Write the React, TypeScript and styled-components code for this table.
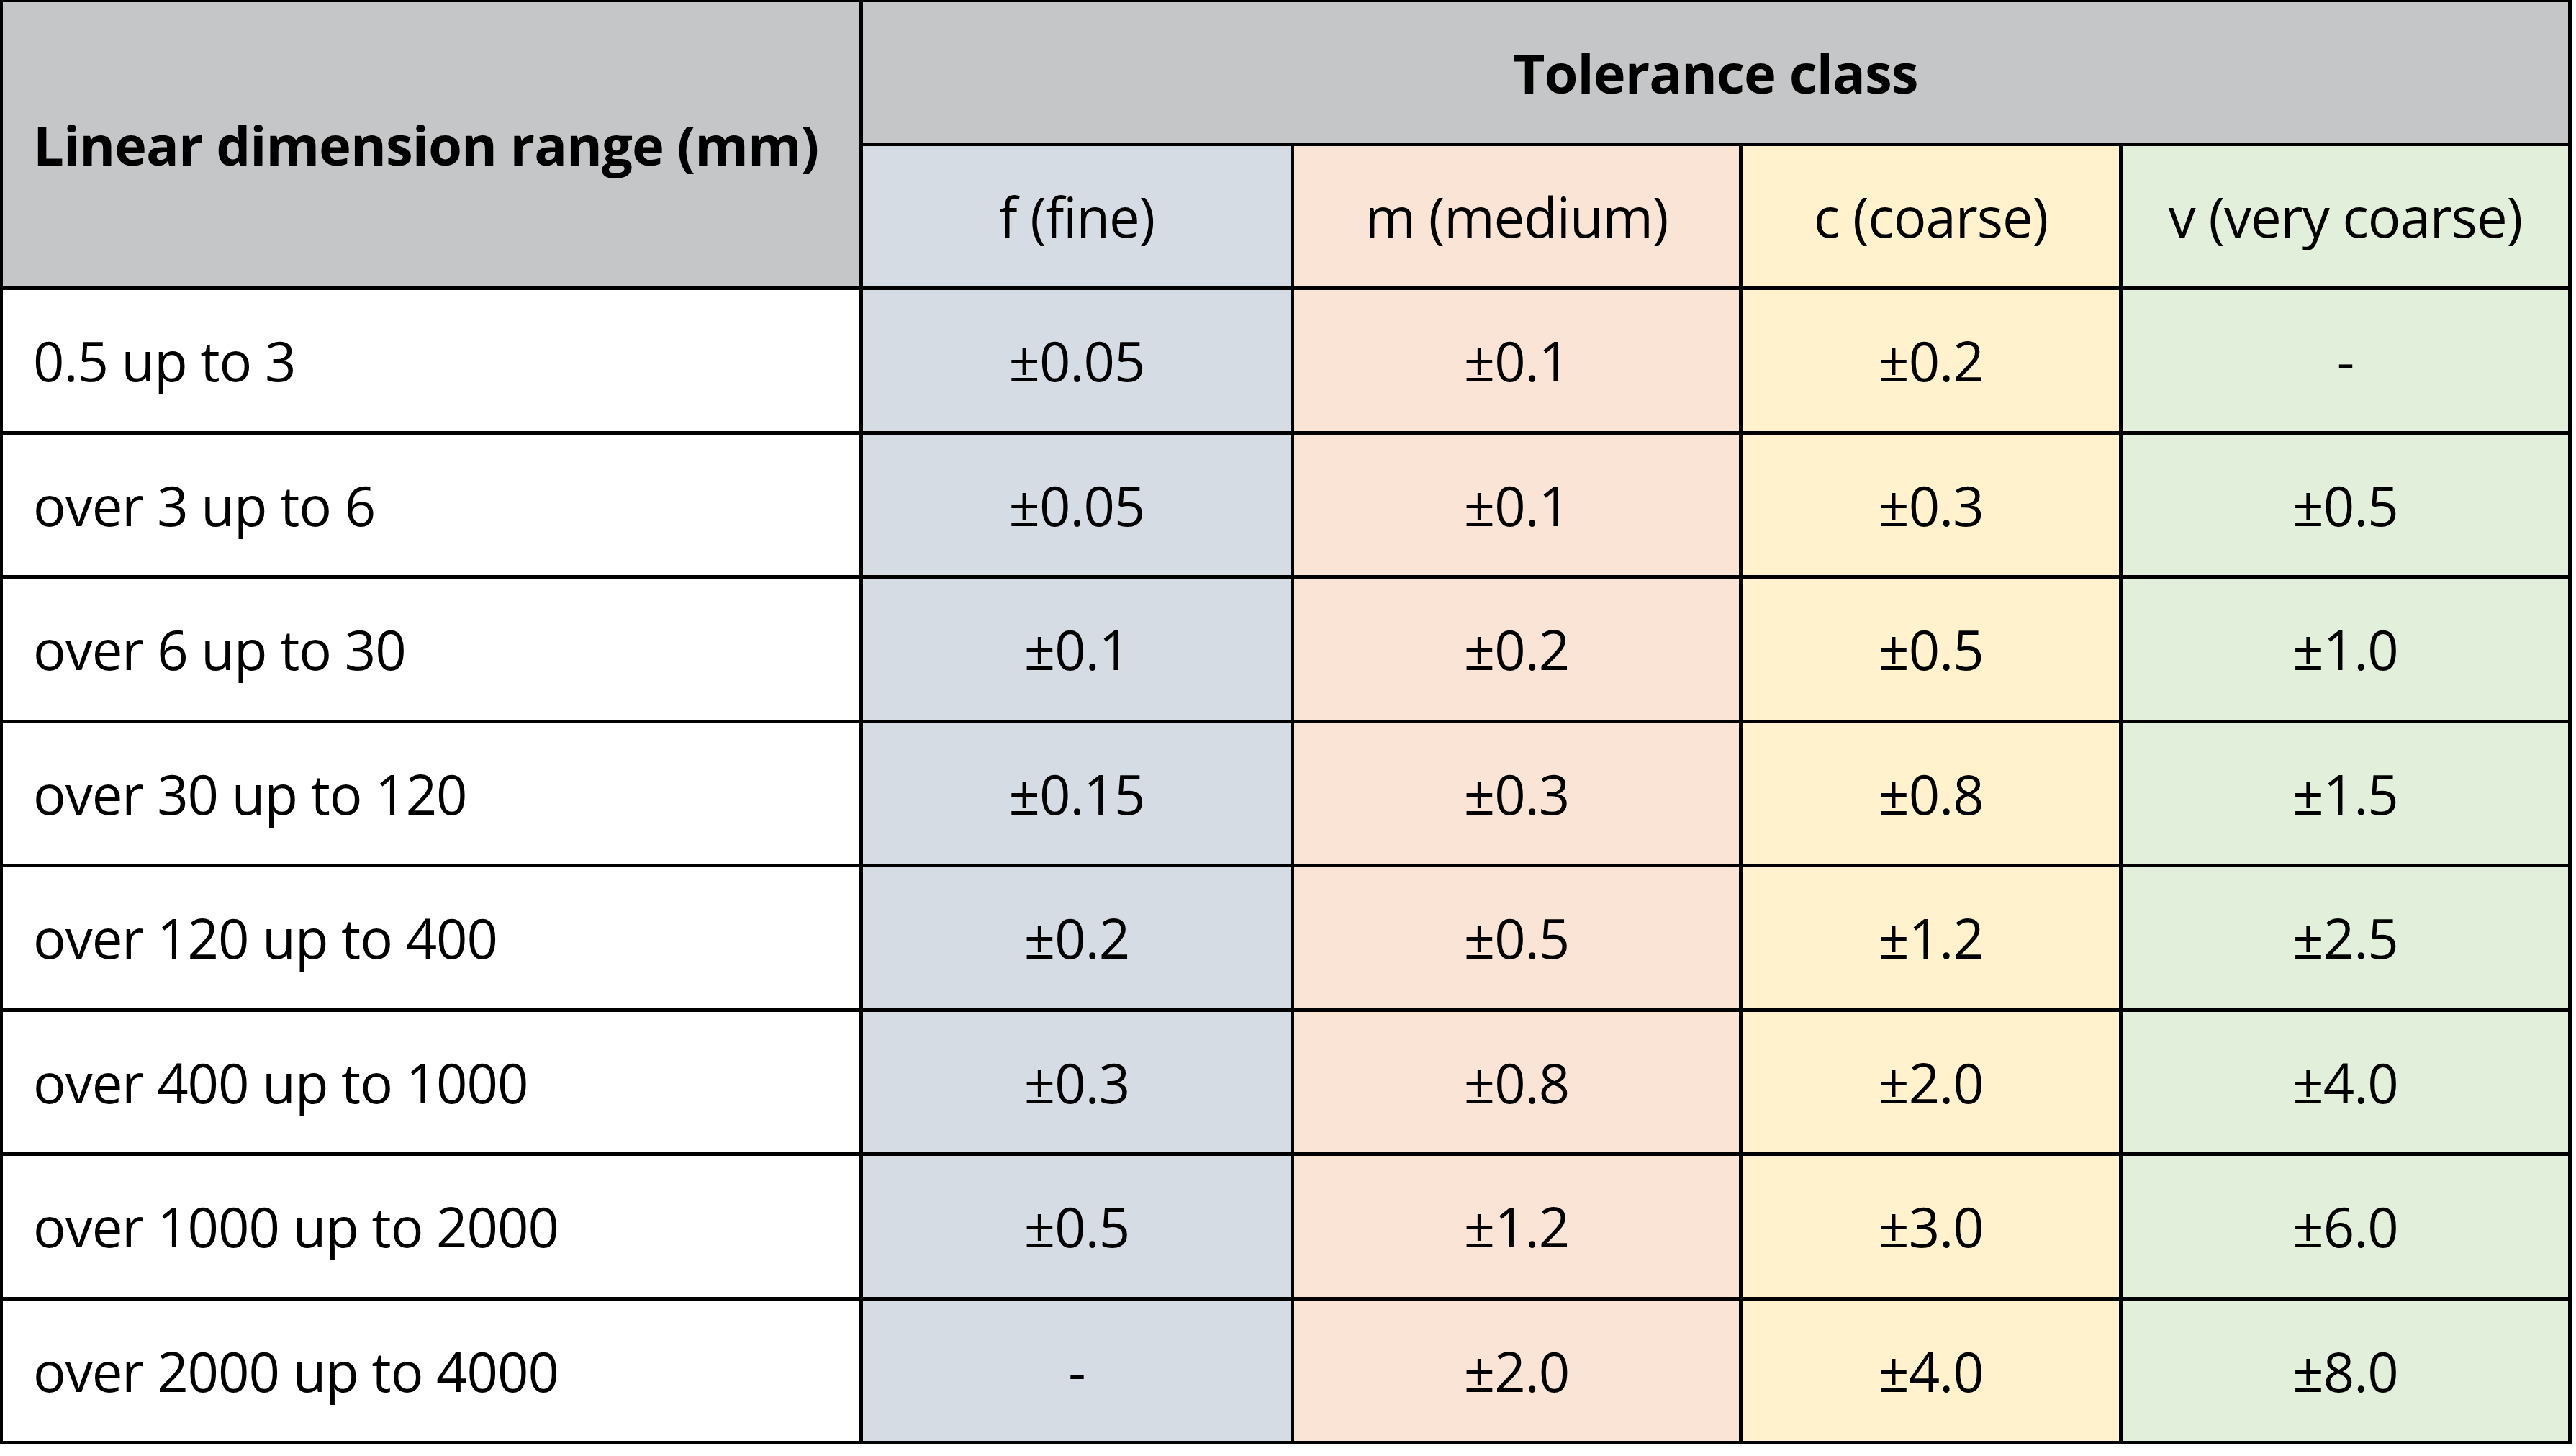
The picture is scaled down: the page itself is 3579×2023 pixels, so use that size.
import styled, { createGlobalStyle } from 'styled-components';

const GlobalStyle = createGlobalStyle`
    html, body {
        margin: 0;
        padding: 0;
        background: #ffffff;
    }
`;

const tones: Record<string, string> = {
    f: '#d6dce4',
    m: '#fae4d6',
    c: '#fff2cc',
    v: '#e2efda',
};

const Table = styled.div`
    display: grid;
    width: max-content;
    grid-template-columns: 1190px 594px 618px 523px 619px;
    grid-template-rows: 195px 195px repeat(8, 195.5px);
    gap: 5px;
    padding: 3px 5px 5px 4px;
    background: #000000;
    font-family: 'Open Sans', 'Noto Sans', sans-serif;
    font-size: 76px;
    letter-spacing: -1px;
    color: #000000;
`;

const Cell = styled.div`
    display: flex;
    align-items: center;
    justify-content: center;
    white-space: nowrap;
`;

const HeadCell = styled(Cell)<{ $rows?: number; $cols?: number; $left?: boolean }>`
    background: #c5c6c8;
    font-weight: 700;
    grid-row: span ${(p) => p.$rows || 1};
    grid-column: span ${(p) => p.$cols || 1};
    justify-content: ${(p) => (p.$left ? 'flex-start' : 'center')};
    padding-left: ${(p) => (p.$left ? '42px' : '0')};
`;

const ToneCell = styled(Cell)<{ $tone: string }>`
    background: ${(p) => tones[p.$tone]};
`;

const RangeCell = styled(Cell)`
    background: #ffffff;
    justify-content: flex-start;
    padding-left: 42px;
`;

const classes = [
    { key: 'f', label: 'f (fine)' },
    { key: 'm', label: 'm (medium)' },
    { key: 'c', label: 'c (coarse)' },
    { key: 'v', label: 'v (very coarse)' },
];

const rows = [
    { range: '0.5 up to 3', values: ['±0.05', '±0.1', '±0.2', '-'] },
    { range: 'over 3 up to 6', values: ['±0.05', '±0.1', '±0.3', '±0.5'] },
    { range: 'over 6 up to 30', values: ['±0.1', '±0.2', '±0.5', '±1.0'] },
    { range: 'over 30 up to 120', values: ['±0.15', '±0.3', '±0.8', '±1.5'] },
    { range: 'over 120 up to 400', values: ['±0.2', '±0.5', '±1.2', '±2.5'] },
    { range: 'over 400 up to 1000', values: ['±0.3', '±0.8', '±2.0', '±4.0'] },
    { range: 'over 1000 up to 2000', values: ['±0.5', '±1.2', '±3.0', '±6.0'] },
    { range: 'over 2000 up to 4000', values: ['-', '±2.0', '±4.0', '±8.0'] },
];

export default function App() {
    return (
        <>
            <GlobalStyle />
            <Table>
                <HeadCell $rows={2} $left>Linear dimension range (mm)</HeadCell>
                <HeadCell $cols={4}>Tolerance class</HeadCell>
                {classes.map((c) => (
                    <ToneCell key={c.key} $tone={c.key}>{c.label}</ToneCell>
                ))}
                {rows.map((r) => (
                    <>
                        <RangeCell key={r.range}>{r.range}</RangeCell>
                        {r.values.map((v, i) => (
                            <ToneCell key={r.range + i} $tone={classes[i].key}>{v}</ToneCell>
                        ))}
                    </>
                ))}
            </Table>
        </>
    );
}
